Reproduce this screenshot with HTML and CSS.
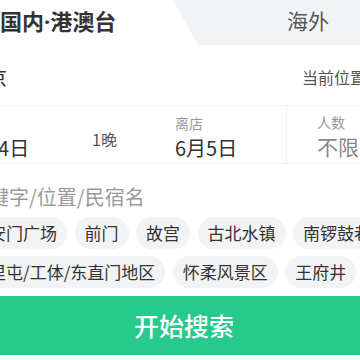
FILE: index.html
```html
<!DOCTYPE html>
<html lang="zh-CN">
<head>
<meta charset="utf-8">
<title>民宿搜索</title>
<link rel="stylesheet" href="styles.css">
</head>
<body>
<div class="screen">
  <div class="panel">
    <div class="tabs">
      <div class="tab tab-home">国内<span class="dot">·</span>港澳台</div>
      <div class="tab tab-abroad">海外</div>
    </div>

    <div class="city-row">
      <span class="city">北京</span>
      <span class="locate">当前位置</span>
    </div>

    <div class="date-row">
      <div class="cell">
        <div class="label">入住</div>
        <div class="value">6月4日</div>
      </div>
      <div class="cell nights">1晚</div>
      <div class="cell cell-out">
        <div class="label">离店</div>
        <div class="value">6月5日</div>
      </div>
      <div class="cell cell-guests">
        <div class="label label-tight">人数</div>
        <div class="value muted">不限</div>
      </div>
    </div>

    <div class="keyword">关键字/位置/民宿名</div>

    <div class="tags">
      <span class="tag">天安门广场</span>
      <span class="tag">前门</span>
      <span class="tag">故宫</span>
      <span class="tag">古北水镇</span>
      <span class="tag">南锣鼓巷</span>
      <span class="tag">三里屯/工体/东直门地区</span>
      <span class="tag">怀柔风景区</span>
      <span class="tag">王府井</span>
    </div>

    <button class="search-btn" type="button">开始搜索</button>
  </div>
</div>
</body>
</html>
```

FILE: styles.css
```css
* { box-sizing: border-box; }

html, body {
  margin: 0;
  padding: 0;
  background: #ffffff;
}

body {
  font-family: "Noto Sans CJK SC", "Noto Sans", sans-serif;
  color: #333333;
}

.screen {
  width: 360px;
  height: 360px;
  overflow: hidden;
}

.panel {
  width: 420px;
  margin-left: -33px;
}

/* tabs */
.tabs {
  display: flex;
  height: 45px;
}

.tab {
  height: 45px;
  line-height: 40px;
  font-size: 21px;
}

.tab-home {
  width: 206px;
  padding-left: 33px;
  font-size: 22px;
  font-weight: 700;
  color: #333333;
  background: #ffffff;
}

.dot {
  font-family: "Noto Sans", "Roboto", sans-serif;
  font-weight: 700;
}

.tab-abroad {
  flex: 1;
  padding-left: 114px;
  color: #555555;
  background: #f2f3f5;
  clip-path: polygon(0 0, 100% 0, 100% 100%, 25px 100%);
}

/* city */
.city-row {
  display: flex;
  justify-content: space-between;
  align-items: center;
  height: 60px;
  padding-top: 4px;
  padding-right: 21px;
}

.city {
  font-size: 20px;
  color: #333333;
}

.locate {
  font-size: 16px;
  color: #555555;
}

/* dates */
.date-row {
  display: grid;
  grid-template-columns: 125px 83px 112px 1fr;
  border-top: 1px solid #f2f2f2;
  border-bottom: 1px solid #f2f2f2;
}

.cell {
  padding-top: 7px;
}

.label {
  font-size: 14px;
  line-height: 20px;
  color: #999999;
}

.label-tight {
  line-height: 18px;
}

.value {
  font-size: 20px;
  line-height: 30px;
  color: #333333;
}

.value.muted {
  font-size: 21px;
  line-height: 30px;
  color: #888888;
}

.nights {
  padding-top: 22px;
  font-size: 16px;
  line-height: 22px;
  color: #555555;
}

.cell-out {
  border-right: 1px solid #f2f2f2;
}

.cell-guests {
  padding-left: 30px;
}

/* keyword */
.keyword {
  padding: 19px 0 0 2px;
  font-size: 20px;
  line-height: 28px;
  color: #9a9a9a;
}

/* tags */
.tags {
  display: flex;
  flex-wrap: wrap;
  gap: 7px 7.5px;
  margin-top: 6px;
  margin-left: -5px;
}

.tag {
  height: 32px;
  padding: 0 10px;
  border-radius: 16px;
  background: #f2f3f5;
  font-size: 17px;
  line-height: 32px;
  color: #333333;
  white-space: nowrap;
}

/* button */
.search-btn {
  display: block;
  width: 420px;
  height: 59px;
  margin-top: 8px;
  padding: 0 0 0 14px;
  border: 0;
  background: #27c98d;
  color: #ffffff;
  font-family: "Noto Sans CJK SC", "Noto Sans", sans-serif;
  font-size: 25px;
  font-weight: 500;
  line-height: 59px;
  text-align: center;
}
```
